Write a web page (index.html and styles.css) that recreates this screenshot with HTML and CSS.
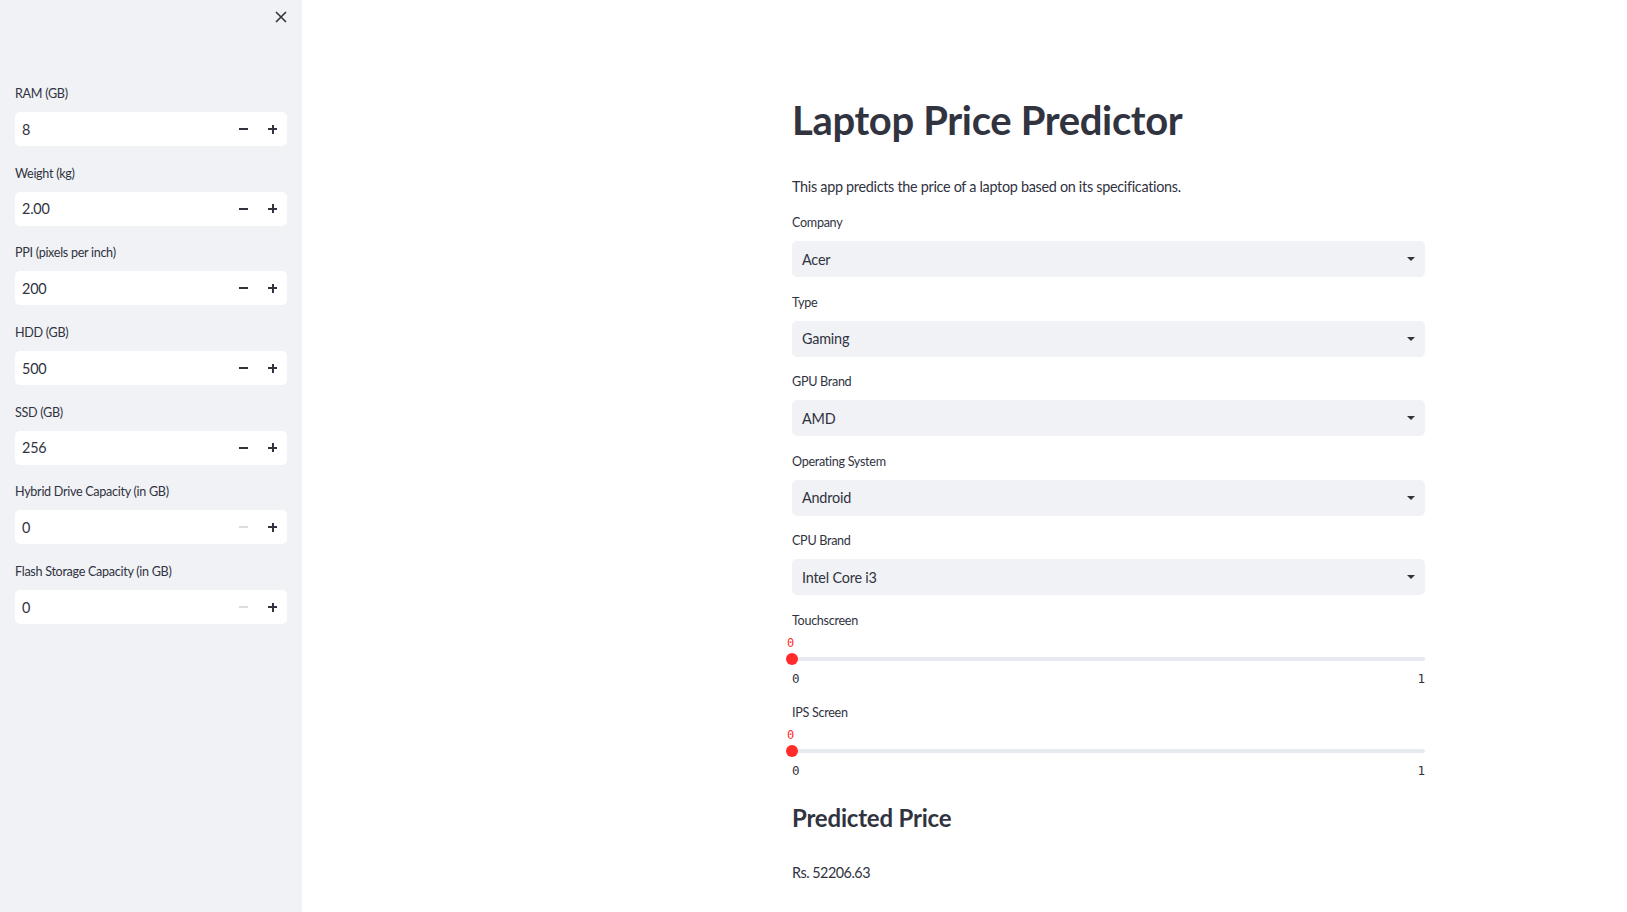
FILE: index.html
```html
<!DOCTYPE html>
<html lang="en">
<head>
<meta charset="utf-8">
<title>Laptop Price Predictor</title>
<link rel="stylesheet" href="styles.css">
</head>
<body>
<div class="app">
  <aside class="sidebar">
    <div class="sb-top">
      <button class="close" aria-label="Close sidebar">
        <svg width="12" height="12" viewBox="0 0 12 12"><path d="M1 1L11 11M11 1L1 11" stroke="#31333f" stroke-width="1.6" fill="none"/></svg>
      </button>
    </div>
    <div class="field">
      <div class="lbl">RAM (GB)</div>
      <div class="num"><span class="val">8</span><span class="step minus"></span><span class="step plus"></span></div>
    </div>
    <div class="field">
      <div class="lbl">Weight (kg)</div>
      <div class="num"><span class="val">2.00</span><span class="step minus"></span><span class="step plus"></span></div>
    </div>
    <div class="field">
      <div class="lbl">PPI (pixels per inch)</div>
      <div class="num"><span class="val">200</span><span class="step minus"></span><span class="step plus"></span></div>
    </div>
    <div class="field">
      <div class="lbl">HDD (GB)</div>
      <div class="num"><span class="val">500</span><span class="step minus"></span><span class="step plus"></span></div>
    </div>
    <div class="field">
      <div class="lbl">SSD (GB)</div>
      <div class="num"><span class="val">256</span><span class="step minus"></span><span class="step plus"></span></div>
    </div>
    <div class="field">
      <div class="lbl">Hybrid Drive Capacity (in GB)</div>
      <div class="num"><span class="val">0</span><span class="step minus disabled"></span><span class="step plus"></span></div>
    </div>
    <div class="field">
      <div class="lbl">Flash Storage Capacity (in GB)</div>
      <div class="num"><span class="val">0</span><span class="step minus disabled"></span><span class="step plus"></span></div>
    </div>
  </aside>
  <main class="main">
    <div class="content">
      <h1 class="title">Laptop Price Predictor</h1>
      <p class="desc">This app predicts the price of a laptop based on its specifications.</p>

      <div class="sfield">
        <div class="lbl">Company</div>
        <div class="select"><span>Acer</span><span class="caret"></span></div>
      </div>
      <div class="sfield">
        <div class="lbl">Type</div>
        <div class="select"><span>Gaming</span><span class="caret"></span></div>
      </div>
      <div class="sfield">
        <div class="lbl">GPU Brand</div>
        <div class="select"><span>AMD</span><span class="caret"></span></div>
      </div>
      <div class="sfield">
        <div class="lbl">Operating System</div>
        <div class="select"><span>Android</span><span class="caret"></span></div>
      </div>
      <div class="sfield">
        <div class="lbl">CPU Brand</div>
        <div class="select"><span>Intel Core i3</span><span class="caret"></span></div>
      </div>

      <div class="slider">
        <div class="lbl">Touchscreen</div>
        <div class="sl-value"><span>0</span></div>
        <div class="track"><span class="thumb"></span></div>
        <div class="ticks"><span>0</span><span>1</span></div>
      </div>
      <div class="slider">
        <div class="lbl">IPS Screen</div>
        <div class="sl-value"><span>0</span></div>
        <div class="track"><span class="thumb"></span></div>
        <div class="ticks"><span>0</span><span>1</span></div>
      </div>

      <h2 class="subtitle">Predicted Price</h2>
      <p class="price">Rs. 52206.63</p>
    </div>
  </main>
</div>
</body>
</html>
```

FILE: styles.css
```css
* { box-sizing: border-box; }
html, body {
  margin: 0;
  padding: 0;
  height: 100%;
}
body {
  font-family: "Lato", "Noto Sans", sans-serif;
  color: #31333f;
  background: #ffffff;
  overflow: hidden;
}
.app {
  display: flex;
  height: 912px;
}

/* Sidebar */
.sidebar {
  width: 302px;
  flex: 0 0 302px;
  background: #f0f2f6;
  padding: 0 15px;
  display: flex;
  flex-direction: column;
}
.sb-top {
  height: 84px;
  display: flex;
  justify-content: flex-end;
  align-items: flex-start;
}
.close {
  width: 22px;
  height: 22px;
  margin-top: 6px;
  margin-right: -5px;
  border: 0;
  background: transparent;
  padding: 0;
  display: flex;
  align-items: center;
  justify-content: center;
}
.lbl {
  font-size: 12.6px;
  line-height: 20px;
  height: 20px;
  letter-spacing: -0.3px;
  color: #31333f;
}
.field {
  display: flex;
  flex-direction: column;
  gap: 8px;
  margin-bottom: 17.7px;
}
.num {
  height: 34px;
  background: #ffffff;
  border-radius: 5px;
  display: flex;
  align-items: center;
}
.val {
  flex: 1;
  padding-left: 7px;
  font-size: 14.4px;
  letter-spacing: -0.2px;
}
.step {
  width: 29px;
  height: 34px;
  position: relative;
}
.step::before,
.step::after {
  content: "";
  position: absolute;
  left: 50%;
  top: 50%;
  background: #31333f;
}
.minus::before {
  width: 9px;
  height: 2px;
  margin: -1px 0 0 -4.5px;
}
.minus::after { display: none; }
.minus.disabled::before { background: #dcdde1; }
.plus::before {
  width: 9px;
  height: 2px;
  margin: -1px 0 0 -4.5px;
}
.plus::after {
  width: 2px;
  height: 9px;
  margin: -4.5px 0 0 -1px;
}

/* Main */
.main {
  flex: 1;
  padding-left: 490px;
}
.content {
  width: 633px;
  display: flex;
  flex-direction: column;
}
.title {
  margin: 96px 0 0 0;
  font-size: 40px;
  line-height: 48px;
  font-weight: 700;
  letter-spacing: -0.35px;
}
.desc {
  margin: 33px 0 0 0;
  font-size: 14.4px;
  line-height: 20px;
  letter-spacing: -0.3px;
}
.sfield {
  display: flex;
  flex-direction: column;
  gap: 8px;
  margin-top: 16px;
}
.sfield + .sfield { margin-top: 15.6px; }
.select {
  height: 36px;
  background: #f0f2f6;
  border-radius: 5px;
  display: flex;
  align-items: center;
  justify-content: space-between;
  padding: 0 10px;
  font-size: 14.4px;
  letter-spacing: -0.2px;
}
.caret {
  width: 0;
  height: 0;
  border-left: 4px solid transparent;
  border-right: 4px solid transparent;
  border-top: 4px solid #31333f;
}

.slider {
  margin-top: 16px;
  display: flex;
  flex-direction: column;
}
.slider + .slider { margin-top: 16px; }
.sl-value {
  height: 16px;
  margin-top: 4px;
  font-family: "DejaVu Sans Mono", monospace;
  font-size: 12px;
  line-height: 16px;
  color: #ff2b2b;
}
.sl-value span { margin-left: -5px; }
.track {
  height: 4px;
  margin-top: 6px;
  background: #e6e9ef;
  border-radius: 2px;
  position: relative;
}
.thumb {
  position: absolute;
  left: -6px;
  top: -4px;
  width: 12px;
  height: 12px;
  border-radius: 50%;
  background: #ff2b2b;
}
.ticks {
  display: flex;
  justify-content: space-between;
  margin-top: 10px;
  height: 16px;
  font-family: "DejaVu Sans Mono", monospace;
  font-size: 12.6px;
  line-height: 16px;
}

.subtitle {
  margin: 22px 0 0 0;
  font-size: 24px;
  line-height: 34px;
  font-weight: 700;
  letter-spacing: -0.2px;
}
.price {
  margin: 28px 0 0 0;
  font-size: 14.4px;
  line-height: 20px;
  letter-spacing: -0.5px;
}
```
